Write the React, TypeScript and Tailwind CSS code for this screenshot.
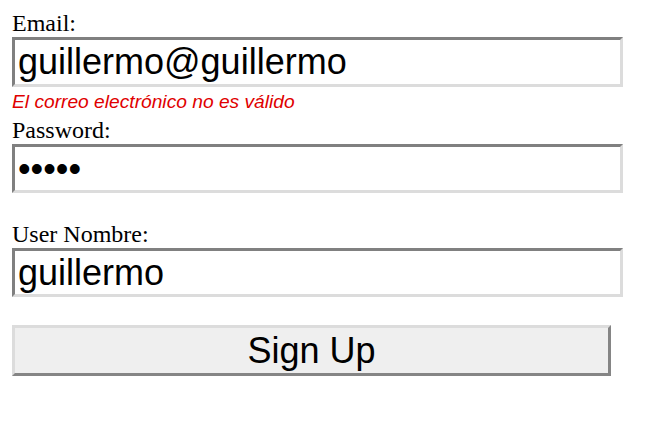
import React from "react";

export default function App() {
  const inputCls =
    "block w-[611px] px-[3px] py-[1.5px] text-[36px] leading-[normal] text-black bg-white outline-none border-[3px] border-solid border-t-[#808080] border-l-[#808080] border-b-[#dcdcdc] border-r-[#dcdcdc] [font-family:'Liberation_Sans',Arial,sans-serif]";
  return (
    <div className="min-h-[430px] w-[658px] bg-white pl-[12px] pt-[9px] text-[24px] leading-[28px] text-black [font-family:'Liberation_Serif','Times_New_Roman',serif]">
      <form onSubmit={(e) => e.preventDefault()}>
        <div className="h-[28px]">Email:</div>
        <input className={inputCls + " h-[50px]"} type="text" readOnly value="guillermo@guillermo" />
        <div className="h-[29px] leading-[27px]">
          <span className="text-[19.2px] italic text-[#e00000] [font-family:'Liberation_Sans',Arial,sans-serif]">
            El correo electrónico no es válido
          </span>
        </div>
        <div className="h-[28px]">Password:</div>
        <input className={inputCls + " h-[49px]"} type="password" readOnly value="guill" />
        <div className="h-[27px]" />
        <div className="h-[28px]">User Nombre:</div>
        <input className={inputCls + " h-[49px]"} type="text" readOnly value="guillermo" />
        <div className="h-[28px]" />
        <button
          type="submit"
          className="block w-[599px] h-[51px] px-[9px] py-[1.5px] text-[36px] leading-[normal] text-black bg-[#efefef] border-[3px] border-solid border-t-[#dcdcdc] border-l-[#dcdcdc] border-b-[#858585] border-r-[#858585] [font-family:'Liberation_Sans',Arial,sans-serif]"
        >
          Sign Up
        </button>
      </form>
    </div>
  );
}
